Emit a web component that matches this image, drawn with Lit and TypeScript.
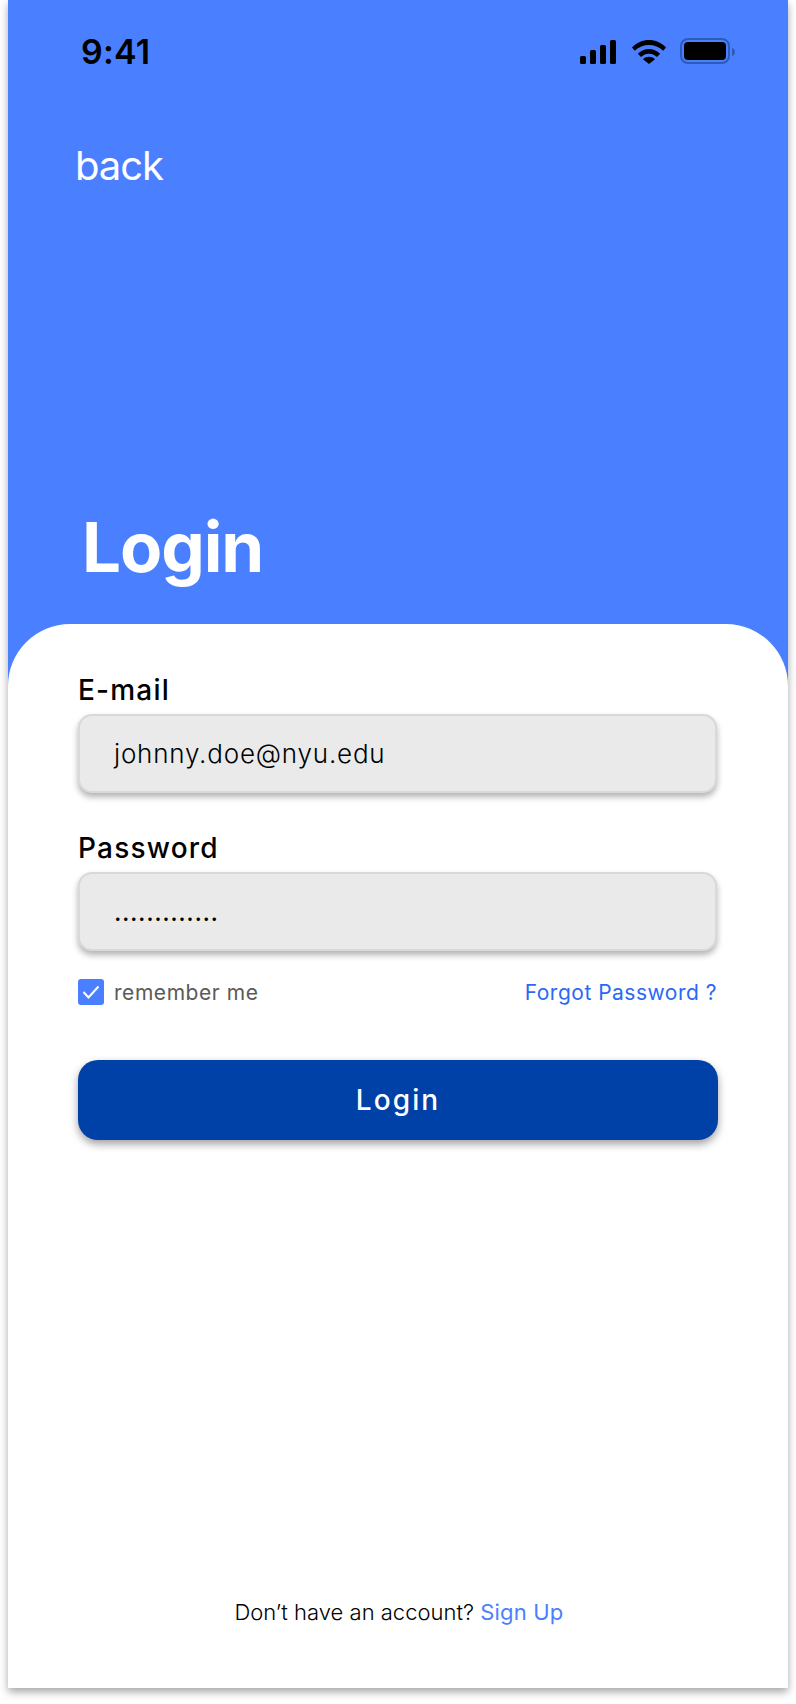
import { LitElement, html, css } from "lit";
import { customElement } from "lit/decorators.js";

@customElement("app-root")
export class AppRoot extends LitElement {
  static styles = css`
    :host { display: block; width: 796px; height: 1704px; background: #fff; font-family: Inter, "Liberation Sans", sans-serif; }
    .phone { margin: 0 8px; width: 780px; height: 1688px; background: #4a80ff; display: flex; flex-direction: column; box-shadow: 0 4px 8px rgba(0,0,0,.35); }
    .hero { height: 624px; flex: none; display: flex; flex-direction: column; }
    .status { display: flex; justify-content: space-between; align-items: center; height: 30px; margin-top: 36px; padding: 0 52px 0 73px; }
    .time { font-size: 34px; font-weight: 600; color: #000; line-height: 30px; position: relative; top: 1px; letter-spacing: .2px; }
    .status svg { display: block; }
    .back { margin: 76px 0 0 67px; font-size: 40px; line-height: 48px; color: #fff; font-weight: 400; letter-spacing: -1.1px; }
    .title { margin: auto 0 35px 74px; font-size: 69px; line-height: 84px; font-weight: 700; color: #fff; letter-spacing: -1.1px; }
    .card { flex: 1; background: #fff; border-radius: 62px 62px 0 0; padding: 49px 70px 0 70px; display: flex; flex-direction: column; }
    .label { font-size: 28px; line-height: 34px; font-weight: 500; color: #000; margin: 0 0 7px 0; letter-spacing: 1.2px; }
    .field { box-sizing: border-box; height: 79px; width: 639px; background: #eaeaea; border: 2px solid #d9d9d9; border-radius: 14px; box-shadow: 0 4px 6px rgba(0,0,0,.3); display: flex; align-items: center; padding-left: 34px; font-size: 26px; font-weight: 300; color: #000; letter-spacing: .8px; }
    .pw-label { margin-top: 38px; }
    .dots { letter-spacing: .55px; font-weight: 400; font-size: 26px; }
    .row { display: flex; justify-content: space-between; align-items: center; margin-top: 27px; height: 28px; }
    .remember { display: flex; align-items: center; gap: 10px; font-size: 21px; color: #5a5a5a; letter-spacing: .55px; }
    .check { width: 26px; height: 26px; border-radius: 3px; background: #4a80ff; display: flex; align-items: center; justify-content: center; }
    .forgot { font-size: 21px; color: #2a68f5; letter-spacing: .5px; margin-right: 1px; }
    .btn { margin-top: 54px; height: 80px; width: 640px; border-radius: 20px; background: #0041a8; color: #fff; font-size: 28px; font-weight: 500; letter-spacing: 2.1px; display: flex; align-items: center; justify-content: center; box-shadow: 0 4px 8px rgba(0,0,0,.38); }
    .foot { margin-top: auto; margin-bottom: 63px; padding-left: 2px; text-align: center; font-size: 22px; font-weight: 300; color: #000; }
    .foot span { color: #4a80ff; font-weight: 400; letter-spacing: .2px; }
  `;

  render() {
    return html`
      <div class="phone">
        <div class="hero">
          <div class="status">
            <div class="time">9:41</div>
            <svg width="156" height="30" viewBox="580 36 156 30" aria-hidden="true">
              <rect x="580" y="56" width="6" height="8" rx="1.5" fill="#000"/>
              <rect x="590" y="50" width="6" height="14" rx="1.5" fill="#000"/>
              <rect x="600" y="45" width="6" height="19" rx="1.5" fill="#000"/>
              <rect x="610" y="40" width="6" height="24" rx="1.5" fill="#000"/>
              <path d="M632 47.5C641 37.5 657 37.5 666 47.5L663.2 50.8C655.5 43 642.5 43 634.8 50.8Z" fill="#000"/>
              <path d="M637.8 53.8C644 47.5 654 47.5 660.2 53.8L657 57C652.5 52.5 645.5 52.5 641 57Z" fill="#000"/>
              <path d="M643 59.2C646.5 56 651.5 56 655 59.2L649 64Z" fill="#000"/>
              <rect x="681" y="39" width="48" height="24" rx="7" fill="none" stroke="#2c5cb8" stroke-width="2"/>
              <rect x="684" y="42" width="42" height="18" rx="4" fill="#000"/>
              <path d="M732 48C734.5 49 735 50 735 52C735 54 734.5 55 732 56Z" fill="#2c5cb8"/>
            </svg>
          </div>
          <div class="back">back</div>
          <div class="title">Login</div>
        </div>
        <div class="card">
          <div class="label">E-mail</div>
          <div class="field">johnny.doe@nyu.edu</div>
          <div class="label pw-label">Password</div>
          <div class="field dots">.............</div>
          <div class="row">
            <div class="remember">
              <div class="check">
                <svg width="18" height="14" viewBox="0 0 18 14" aria-hidden="true"><path d="M1.5 7L6.5 12.5L16.5 1.5" fill="none" stroke="#fff" stroke-width="2"/></svg>
              </div>
              remember me
            </div>
            <div class="forgot">Forgot Password ?</div>
          </div>
          <div class="btn">Login</div>
          <div class="foot">Don’t have an account? <span>Sign Up</span></div>
        </div>
      </div>
    `;
  }
}
